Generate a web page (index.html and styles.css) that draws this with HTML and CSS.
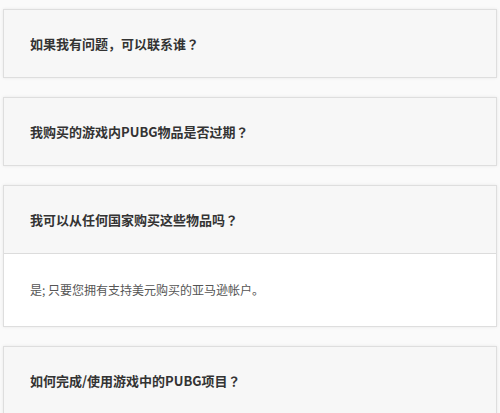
FILE: index.html
```html
<!DOCTYPE html>
<html lang="zh-CN">
<head>
    <meta charset="UTF-8">
    <meta name="viewport" content="width=device-width, initial-scale=1.0">
    <title>常见问题</title>
    <link rel="stylesheet" href="styles.css">
</head>
<body>
    <div class="faq-list">
        <div class="faq-item">
            <div class="faq-question">如果我有问题，可以联系谁<span class="qmark" lang="zh-TW">？</span></div>
        </div>
        <div class="faq-item">
            <div class="faq-question">我购买的游戏内PUBG物品是否过期<span class="qmark" lang="zh-TW">？</span></div>
        </div>
        <div class="faq-item open">
            <div class="faq-question">我可以从任何国家购买这些物品吗<span class="qmark" lang="zh-TW">？</span></div>
            <div class="faq-answer">是; 只要您拥有支持美元购买的亚马逊帐户。</div>
        </div>
        <div class="faq-item">
            <div class="faq-question">如何完成/使用游戏中的PUBG项目<span class="qmark" lang="zh-TW">？</span></div>
        </div>
    </div>
</body>
</html>
```

FILE: styles.css
```css
body {
    font-family: "Noto Sans CJK SC", "Liberation Sans", sans-serif;
    margin: 0;
    padding: 0;
    background-color: #fafafa;
}

.faq-list {
    padding: 9px 3px;
    display: flex;
    flex-direction: column;
    gap: 19px;
}

.faq-item {
    border: 1px solid #dedede;
    box-shadow: 0 0 3px rgba(0, 0, 0, 0.08);
    background-color: #f7f7f7;
}

.faq-question {
    padding: 27px 26px;
    font-size: 13px;
    line-height: 13px;
    font-weight: bold;
    color: #333;
}

/* centred full-width question mark */
.qmark {
    font-family: "Noto Sans CJK TC", sans-serif;
}

.faq-item.open .faq-question {
    border-bottom: 1px solid #dcdcdc;
}

.faq-answer {
    background-color: #fff;
    padding: 30px 26px;
    font-size: 12px;
    line-height: 12px;
    color: #555;
}
```
